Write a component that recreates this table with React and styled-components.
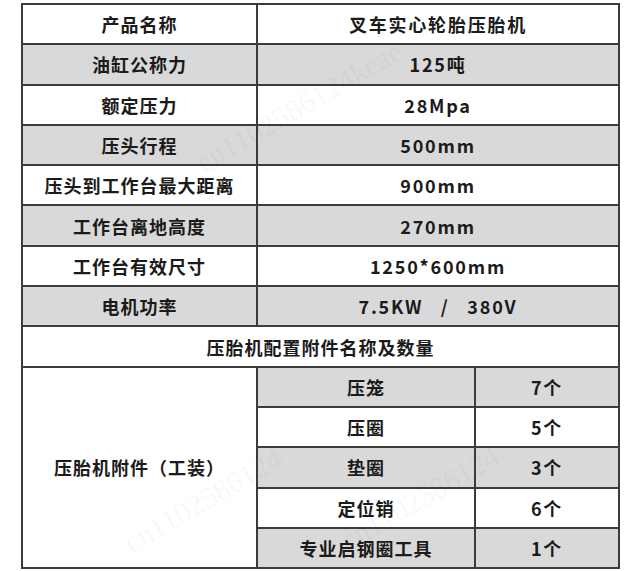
import styled, { createGlobalStyle } from "styled-components"

const Global = createGlobalStyle`
  html, body {
    margin: 0;
    padding: 0;
    background: #fff;
  }
`

const Page = styled.div`
  position: relative;
  width: 636px;
  height: 571px;
  overflow: hidden;
  padding: 3px 0 0 21px;
  box-sizing: border-box;
  font-family: "Noto Sans CJK SC", "Noto Sans", sans-serif;
`

const Table = styled.table`
  width: 597px;
  border-collapse: collapse;
  table-layout: fixed;
  border: 2px solid #3c3c3c;
`

const Row = styled.tr`
  height: 40.3px;
`

const Cell = styled.td`
  border: 2px solid #3c3c3c;
  padding: 0;
  text-align: center;
  vertical-align: middle;
  font-size: 18px;
  font-weight: 700;
  letter-spacing: ${(p) => (p.$wide ? "1.8px" : "1px")};
  color: #1b1b1b;
  white-space: pre;
  background: ${(p) => (p.$shade ? "#d9d9d9" : "#fff")};
`

const Mark = styled.div`
  position: absolute;
  left: ${(p) => p.$x}px;
  top: ${(p) => p.$y}px;
  transform: rotate(-30deg);
  transform-origin: left top;
  font-family: "Liberation Serif", serif;
  font-size: ${(p) => p.$size || 30}px;
  color: rgba(0, 0, 0, 0.045);
  white-space: nowrap;
  pointer-events: none;
`

const specs = [
  ["产品名称", "叉车实心轮胎压胎机"],
  ["油缸公称力", "125吨"],
  ["额定压力", "28Mpa"],
  ["压头行程", "500mm"],
  ["压头到工作台最大距离", "900mm"],
  ["工作台离地高度", "270mm"],
  ["工作台有效尺寸", "1250*600mm"],
  ["电机功率", "7.5KW   /   380V"],
]

const parts = [
  ["压笼", "7个"],
  ["压圈", "5个"],
  ["垫圈", "3个"],
  ["定位销", "6个"],
  ["专业启钢圈工具", "1个"],
]

const marks = [
  { x: 190, y: 150, t: "cn1102586124keae", s: 30 },
  { x: 118, y: 530, t: "cn1102586124", s: 30 },
  { x: 335, y: 528, t: "cn1102586124", s: 30 },
]

const App = () => {
  return (
    <Page>
      <Global />
      <Table>
        <colgroup>
          <col style={{ width: 235 }} />
          <col style={{ width: 218 }} />
          <col style={{ width: 144 }} />
        </colgroup>
        <tbody>
          {specs.map(([k, v], i) => (
            <Row key={k}>
              <Cell $shade={i % 2 === 1}>{k}</Cell>
              <Cell $shade={i % 2 === 1} $wide colSpan={2}>{v}</Cell>
            </Row>
          ))}
          <Row>
            <Cell colSpan={3}>压胎机配置附件名称及数量</Cell>
          </Row>
          {parts.map(([k, v], i) => (
            <Row key={k}>
              {i === 0 && <Cell rowSpan={5}>压胎机附件（工装）</Cell>}
              <Cell $shade={i % 2 === 0}>{k}</Cell>
              <Cell $shade={i % 2 === 0} $wide>{v}</Cell>
            </Row>
          ))}
        </tbody>
      </Table>
      {marks.map((m, i) => (
        <Mark key={i} $x={m.x} $y={m.y} $size={m.s}>{m.t}</Mark>
      ))}
    </Page>
  )
}

export default App
